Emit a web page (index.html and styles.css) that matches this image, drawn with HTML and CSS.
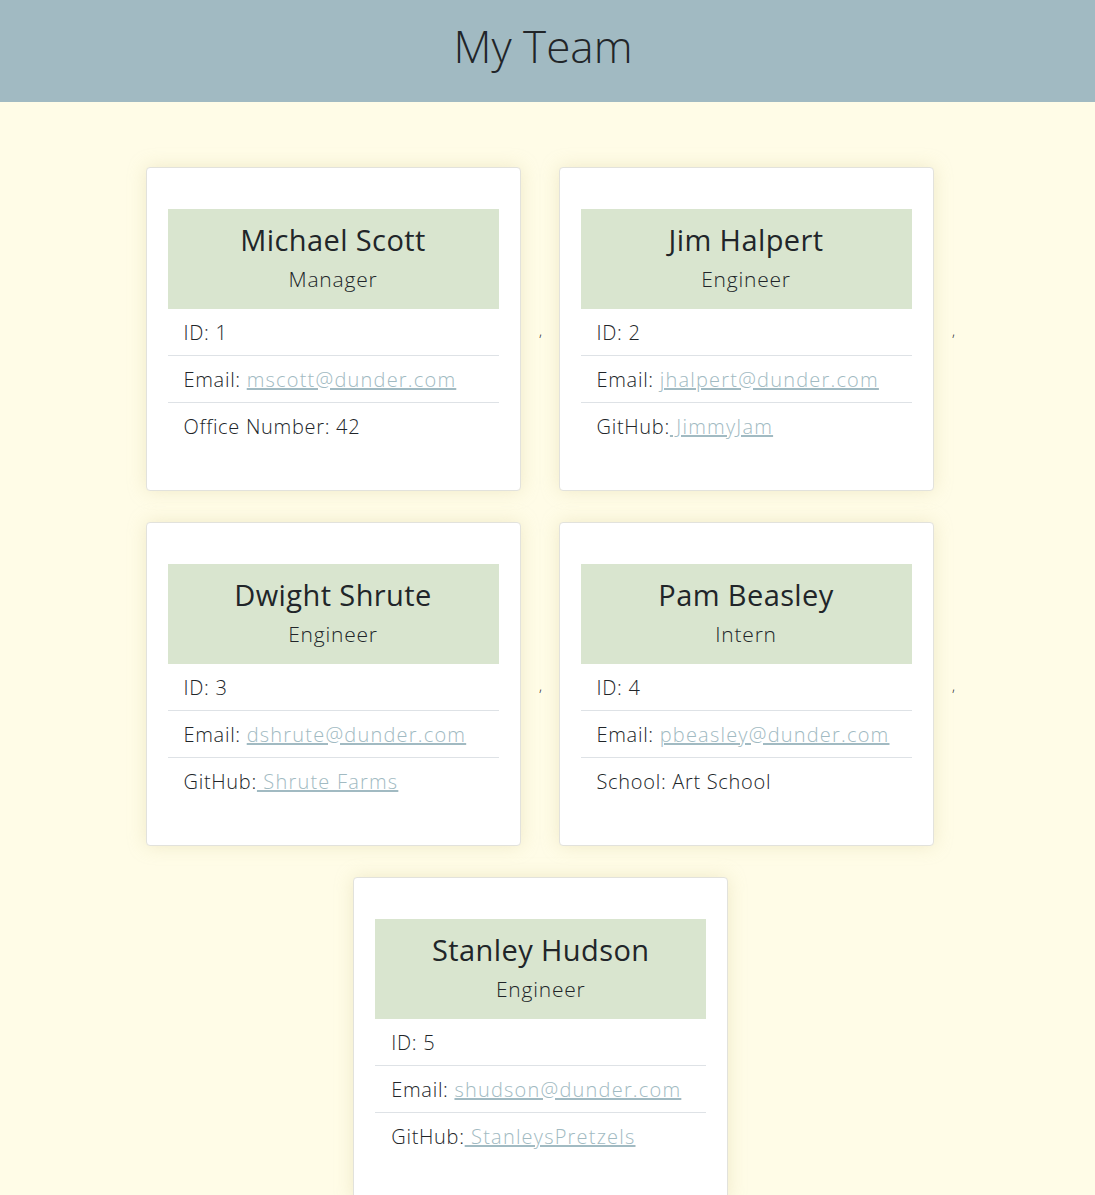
FILE: index.html
```html
<!DOCTYPE html>
<html lang="en">
<head>
<meta charset="utf-8">
<title>My Team</title>
<link rel="stylesheet" href="styles.css">
</head>
<body>
<header class="hero">
  <h1 class="hero-title">My Team</h1>
</header>
<main class="team">
  <div class="card">
    <div class="card-head">
      <h2 class="card-name">Michael Scott</h2>
      <p class="card-role">Manager</p>
    </div>
    <ul class="info">
      <li class="info-item">ID: 1</li>
      <li class="info-item">Email: <a class="link" href="#">mscott@dunder.com</a></li>
      <li class="info-item">Office Number: 42</li>
    </ul>
  </div>
  <span class="sep">,</span>
  <div class="card">
    <div class="card-head">
      <h2 class="card-name">Jim Halpert</h2>
      <p class="card-role">Engineer</p>
    </div>
    <ul class="info">
      <li class="info-item">ID: 2</li>
      <li class="info-item">Email: <a class="link" href="#">jhalpert@dunder.com</a></li>
      <li class="info-item">GitHub:<a class="link" href="#"> JimmyJam</a></li>
    </ul>
  </div>
  <span class="sep">,</span>
  <div class="card">
    <div class="card-head">
      <h2 class="card-name">Dwight Shrute</h2>
      <p class="card-role">Engineer</p>
    </div>
    <ul class="info">
      <li class="info-item">ID: 3</li>
      <li class="info-item">Email: <a class="link" href="#">dshrute@dunder.com</a></li>
      <li class="info-item">GitHub:<a class="link" href="#"> Shrute Farms</a></li>
    </ul>
  </div>
  <span class="sep">,</span>
  <div class="card">
    <div class="card-head">
      <h2 class="card-name">Pam Beasley</h2>
      <p class="card-role">Intern</p>
    </div>
    <ul class="info">
      <li class="info-item">ID: 4</li>
      <li class="info-item">Email: <a class="link" href="#">pbeasley@dunder.com</a></li>
      <li class="info-item">School: Art School</li>
    </ul>
  </div>
  <span class="sep">,</span>
  <div class="card">
    <div class="card-head">
      <h2 class="card-name">Stanley Hudson</h2>
      <p class="card-role">Engineer</p>
    </div>
    <ul class="info">
      <li class="info-item">ID: 5</li>
      <li class="info-item">Email: <a class="link" href="#">shudson@dunder.com</a></li>
      <li class="info-item">GitHub:<a class="link" href="#"> StanleysPretzels</a></li>
    </ul>
  </div>
</main>
</body>
</html>
```

FILE: styles.css
```css
* { box-sizing: border-box; }

html, body {
  margin: 0;
  padding: 0;
}

body {
  background: #fffce7;
  color: #212529;
  font-family: "Open Sans", "Liberation Sans", sans-serif;
  font-weight: 300;
}

.hero {
  background: #a1bac2;
  height: 102px;
  display: flex;
  align-items: center;
  justify-content: center;
  padding-right: 9px;
}

.hero-title {
  margin: 0;
  font-size: 44px;
  font-weight: 300;
  line-height: 1;
  padding-bottom: 10px;
}

.team {
  display: flex;
  flex-wrap: wrap;
  justify-content: center;
  align-items: center;
  padding: 65px 14px 0 0;
}

.card {
  width: 375px;
  margin: 0 17.5px 31px 18px;
  background: #fff;
  border: 1px solid #e2e2dc;
  border-radius: 4px;
  box-shadow: 0 0 18px rgba(214, 205, 150, 0.38);
  padding: 41px 21px 40px;
}

.sep {
  width: 2.5px;
  font-size: 14px;
  line-height: 1;
  color: #212529;
  margin-bottom: 31px;
  position: relative;
  top: 2px;
  left: 1px;
}

.card-head {
  background: #d9e5cf;
  height: 100px;
  text-align: center;
  padding-top: 12px;
}

.card-name {
  margin: 0;
  font-size: 29px;
  font-weight: 400;
  letter-spacing: 0.4px;
  line-height: 38px;
}

.card-role {
  margin: 7px 0 0;
  font-size: 21px;
  font-weight: 300;
  letter-spacing: 0.8px;
  line-height: 26px;
}

.info {
  list-style: none;
  margin: 0;
  padding: 0;
}

.info-item {
  height: 47px;
  padding: 0 16px;
  display: flex;
  align-items: center;
  white-space: pre;
  font-size: 20px;
  letter-spacing: 0.7px;
  border-bottom: 1px solid #dee2e6;
}

.info-item:last-child {
  border-bottom: none;
}

.link {
  color: #a1bac2;
  text-decoration: underline;
  letter-spacing: 1.2px;
}
```
